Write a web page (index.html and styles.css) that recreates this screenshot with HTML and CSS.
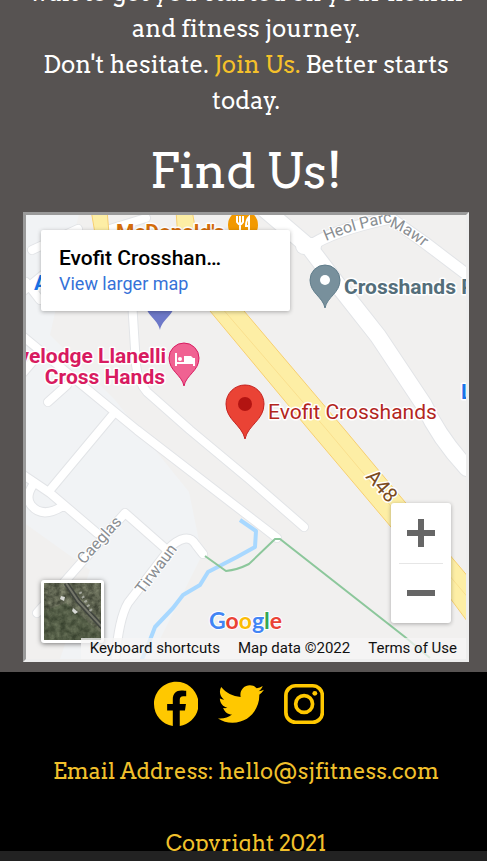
FILE: index.html
```html
<!DOCTYPE html>
<html lang="en">
<head>
<meta charset="utf-8">
<meta name="viewport" content="width=device-width, initial-scale=1">
<title>SJ Fitness</title>
<link rel="stylesheet" href="styles.css">
</head>
<body>
<div class="page">
  <main class="content">
    <p class="intro">wait to get you started on your health and fitness journey.<br>Don't hesitate. <a href="#join">Join Us.</a> Better starts today.</p>
    <h1 class="heading">Find Us!</h1>
    <section class="map" aria-label="Map">
      <svg class="map-canvas" viewBox="26 215 440 444" preserveAspectRatio="xMidYMid slice">
        <defs>
          <path id="heol" d="M326 241Q358 227 400 221"/>
          <path id="mawr" d="M389 227Q407 232 436 258"/>
          <path id="pin" d="M0 43C-2 32-15 28-15 15A15 15 0 0 1 15 15C15 28 2 32 0 43Z"/>
          <g id="roads">
            <path class="w17" d="M262 207L309 247L337 284L378 336L424 405Q439 438 467 468"/>
            <path class="w12" d="M309 247Q330 231 390 218L424 242L470 277"/>
            <path class="w17" d="M304 246h9"/>
            <path class="w8" d="M22 292L54 266M26 282L40 300M32 250L78 229M100 232L146 218M132 300L136 365Q138 382 147 392L190 430L250 480L304 527"/>
            <path class="w8" d="M20 334L115 412L137 430L277 538M67 385L48 402M115 412L50 490M22 474L50 493L97 533M33 485Q25 497 31 505Q42 519 63 506M34 360L22 374"/>
            <path class="w8" d="M37 613L125 513L167 550Q187 530 196 545L203 554M168 551L128 603Q118 620 115 666"/>
          </g>
        </defs>
        <path fill="#f1f0ef" d="M-200 0h900v900h-900z"/>
        <path fill="#f1f3f5" d="M20 210L80 210L60 290L50 335L115 400L189 492L202 555L150 659L60 659L90 570L20 520Z"/>
        <use href="#roads" class="casing"/>
        <use href="#roads" class="surface"/>
        <path class="highway" d="M176 210L192 210L200 255L244 311L345 430L405 502L470 579L470 625L450 598L391 527L309 430L210 311L180 270ZM91 210L107 210L110 245L97 245Z"/>
        <path class="highway-line" d="M215 300L327 430L400 517L470 600"/>
        <path class="river" d="M240 520L256 531L255 547L237 557L208 572L200 585L183 595L173 608L155 627L150 640L140 664"/>
        <path class="trail" d="M205 556L226 571Q237 570 249 564L275 539L280 539L405 637L430 658"/>
        <g class="halo">
          <text class="road-label"><textPath href="#heol">Heol Parc</textPath></text>
          <text class="road-label"><textPath href="#mawr">Mawr</textPath></text>
          <text class="road-label" transform="translate(84 565) rotate(-48)">Caeglas</text>
          <text class="road-label" transform="translate(143 595) rotate(-53)">Tirwaun</text>
          <text class="a48" transform="translate(365 477) rotate(49)">A48</text>
          <text class="place food" x="116" y="239">McDonald's</text>
          <text class="place hotel" text-anchor="end" x="166" y="363">Travelodge Llanelli</text>
          <text class="place hotel" text-anchor="end" x="165" y="384">Cross Hands</text>
          <text class="place slate" x="344" y="294">Crosshands Post</text>
          <text class="place blue" x="34" y="290">A</text>
          <text class="place blue" x="461" y="399">L</text>
          <text class="target" x="268" y="419">Evofit Crosshands</text>
        </g>
        <circle cx="243" cy="225" r="15" fill="#f29900"/>
        <path fill="none" stroke="#fff" stroke-width="2" d="M237 216v6q3 5 6 0v-6M240 216v17M249 233v-16q-3 3-3 9h3"/>
        <use href="#pin" x="160" y="287" fill="#6d78c8"/>
        <use href="#pin" x="184" y="343" fill="#f06292" stroke="#d81b60"/>
        <path fill="none" stroke="#fff" stroke-width="2" d="M176 353v13M176 363h18M194 366v-8"/>
        <path fill="#fff" d="M184 356h7l3 3v4h-10z"/>
        <circle cx="180" cy="359" r="2" fill="#fff"/>
        <use href="#pin" x="325" y="265" fill="#78909c" stroke="#607d8b"/>
        <circle cx="325" cy="280" r="5" fill="#fff"/>
        <path fill="#ea4335" stroke="#c5221f" d="M245 439C242 425 226 420 226 404A19 19 0 0 1 264 404C264 420 248 425 245 439Z"/>
        <circle cx="245" cy="404" r="7" fill="#b31412"/>
        <text class="google" x="209" y="629"><tspan fill="#4285f4">G</tspan><tspan fill="#ea4335">o</tspan><tspan fill="#fbbc05">o</tspan><tspan fill="#4285f4">g</tspan><tspan fill="#34a853">l</tspan><tspan fill="#ea4335">e</tspan></text>
      </svg>
      <div class="place-card">
        <div class="place-name">Evofit Crosshan…</div>
        <a href="#map">View larger map</a>
      </div>
      <button class="satellite" type="button" aria-label="Show satellite imagery">
        <svg viewBox="0 0 57 57">
          <filter id="terrain" x="0" y="0" width="1" height="1" color-interpolation-filters="sRGB"><feTurbulence type="fractalNoise" baseFrequency=".18" numOctaves="4" seed="4"/><feColorMatrix values=".4 0 0 0 .17  .4 0 0 0 .19  .35 0 0 0 .14  0 0 0 0 1"/></filter>
          <path fill="#555a4b" d="M0 0h57v57H0z"/>
          <path filter="url(#terrain)" d="M0 0h57v57H0z"/>
          <path fill="#314529" opacity=".3" d="M0 28L22 20L57 50V57H0Z"/>
          <path fill="none" stroke="#40443e" stroke-width="5" d="M22 0L34 18L60 46"/>
          <path fill="none" stroke="#74766a" stroke-width="2" d="M22 0L34 18L60 46"/>
          <path fill="none" stroke="#a5a89e" stroke-width="3" stroke-dasharray="2 3" d="M36 9L48 29"/>
          <path fill="#d8dad6" d="M17 13l4 1-1 4-4-2zM29 25l5 4-3 2-3-3z"/>
        </svg>
      </button>
      <div class="zoom">
        <button type="button" aria-label="Zoom in"><svg viewBox="0 0 28 28"><path d="M11 0h6v11h11v6H17v11h-6V17H0v-6h11z"/></svg></button>
        <button type="button" aria-label="Zoom out"><svg viewBox="0 0 28 28"><path d="M0 11h28v6H0z"/></svg></button>
      </div>
      <div class="attribution">
        <button type="button">Keyboard shortcuts</button>
        <span>Map data ©2022</span>
        <a href="#terms">Terms of Use</a>
      </div>
    </section>
  </main>
  <footer class="footer">
    <nav class="social" aria-label="Social media">
      <a href="#facebook" aria-label="Facebook"><svg viewBox="8 0 496 512"><path d="M504 256C504 119 393 8 256 8S8 119 8 256c0 123.78 90.69 226.38 209.25 245V327.69h-63V256h63v-54.64c0-62.15 37-96.48 93.67-96.48 27.14 0 55.52 4.84 55.52 4.84v61h-31.28c-30.8 0-40.41 19.12-40.41 38.73V256h68.78l-11 71.69h-57.78V501C413.31 482.38 504 379.78 504 256z"/></svg></a>
      <a href="#twitter" aria-label="Twitter"><svg viewBox="0 0 512 512"><path d="M459.37 151.716c.325 4.548.325 9.097.325 13.645 0 138.72-105.583 298.558-298.558 298.558-59.452 0-114.68-17.219-161.137-47.106 8.447.974 16.568 1.299 25.34 1.299 49.055 0 94.213-16.568 130.274-44.832-46.132-.975-84.792-31.188-98.112-72.772 6.498.974 12.995 1.624 19.818 1.624 9.421 0 18.843-1.3 27.614-3.573-48.081-9.747-84.143-51.98-84.143-102.985v-1.299c13.969 7.797 30.214 12.67 47.431 13.319-28.264-18.843-46.781-51.005-46.781-87.391 0-19.492 5.197-37.36 14.294-52.954 51.655 63.675 129.3 105.258 216.365 109.807-1.624-7.797-2.599-15.918-2.599-24.04 0-57.828 46.782-104.934 104.934-104.934 30.213 0 57.502 12.67 76.67 33.137 23.715-4.548 46.456-13.32 66.599-25.34-7.798 24.366-24.366 44.833-46.132 57.827 21.117-2.273 41.584-8.122 60.426-16.243-14.292 20.791-32.161 39.308-52.628 54.253z"/></svg></a>
      <a href="#instagram" aria-label="Instagram"><svg viewBox="0 0 448 512"><g fill="none" stroke="currentColor" stroke-width="41"><rect x="21" y="53" width="406" height="406" rx="108"/><circle cx="224" cy="256" r="94"/></g><circle cx="343" cy="137" r="27"/></svg></a>
    </nav>
    <p>Email Address: hello@sjfitness.com</p>
    <p>Copyright 2021</p>
  </footer>
</div>
<div class="bottom-bar"></div>
</body>
</html>
```
FILE: styles.css
```css
* { box-sizing: border-box; }

body {
  margin: 0;
  height: 100vh;
  display: flex;
  flex-direction: column;
  overflow: hidden;
  background: #575352;
  color: #fff;
  font-family: Arvo, "DejaVu Serif", serif;
  font-size: 24px;
  line-height: 36px;
  text-align: center;
}

.page {
  flex: 1;
  min-height: 0;
  overflow: hidden;
}

.content { padding: 0 18px 10px 23px; }

.intro { margin: -25px 0 22px; }
.intro a { color: #f5c12a; text-decoration: none; }

.heading {
  margin: 0 0 11px;
  font-size: 48px;
  font-weight: 400;
  line-height: 60px;
}

.map {
  position: relative;
  height: 450px;
  border: 3px solid;
  border-color: #9a9a9a #eee #eee #9a9a9a;
  overflow: hidden;
  font-family: Roboto, sans-serif;
  text-align: left;
}

.map-canvas { display: block; width: 100%; height: 100%; }
.w8 { stroke-width: calc(7px + var(--edge)); }
.w12 { stroke-width: calc(10px + var(--edge)); }
.w17 { stroke-width: calc(15px + var(--edge)); }
#roads path { fill: none; stroke-linejoin: round; stroke-linecap: round; }
.casing { --edge: 3px; stroke: #e2e4e7; }
.surface { --edge: 1px; stroke: #fff; }
.highway { fill: #fdeea5; stroke: #f7cf70; stroke-width: 1px; }
.highway-line { fill: none; stroke: #f9df8e; stroke-width: 1px; }
.river { fill: none; stroke: #a8d8ff; stroke-width: 4px; stroke-linejoin: round; }
.trail { fill: none; stroke: #8cc79b; stroke-width: 2px; }
.halo text { stroke: #fff; stroke-width: 3px; stroke-linejoin: round; paint-order: stroke; }
.halo .road-label { font-size: 16px; fill: #8a8e92; stroke-width: 2px; }
.a48 { font-size: 20px; fill: #7b4b20; }
.place { font-size: 21px; font-weight: 700; }
.food { fill: #d56e0c; }
.hotel { fill: #d81b60; }
.slate { fill: #546e7a; }
.blue { fill: #1a73e8; }
.target { font-size: 21px; fill: #b3261e; }
.google {
  font-family: Lato, sans-serif;
  font-size: 23px;
  font-weight: 700;
  stroke: #fff;
  stroke-width: 2px;
  paint-order: stroke;
}

.place-card {
  position: absolute;
  top: 15px;
  left: 15px;
  width: 249px;
  padding: 15px 18px 14px;
  background: #fff;
  border-radius: 2px;
  box-shadow: 0 1px 4px rgba(0, 0, 0, .3);
}
.place-name {
  color: #000;
  font-size: 21px;
  font-weight: 500;
  line-height: 26px;
}
.place-card a {
  display: block;
  color: #3572d8;
  font-size: 18px;
  line-height: 26px;
  text-decoration: none;
}

.satellite {
  position: absolute;
  left: 15px;
  bottom: 16px;
  width: 63px;
  height: 63px;
  padding: 0;
  border: 3px solid #fff;
  border-radius: 3px;
  background: #555a4b;
  box-shadow: 0 1px 5px rgba(0, 0, 0, .5);
}
.satellite svg { display: block; width: 100%; height: 100%; }

.zoom {
  position: absolute;
  right: 15px;
  bottom: 36px;
  width: 60px;
  background: #fff;
  border-radius: 3px;
  box-shadow: 0 1px 4px rgba(0, 0, 0, .3);
}
.zoom button {
  display: grid;
  place-items: center;
  width: 100%;
  height: 60px;
  padding: 0;
  border: 0;
  background: none;
}
.zoom button + button::before {
  content: "";
  position: absolute;
  top: 60px;
  left: 8px;
  right: 8px;
  height: 1px;
  background: #e6e6e6;
}
.zoom svg { width: 28px; height: 28px; fill: #666; }

.attribution {
  position: absolute;
  right: 0;
  bottom: 0;
  display: flex;
  color: #111;
  font-size: 15px;
  line-height: 21px;
}
.attribution > * {
  padding: 0 9px;
  border: 0;
  background: rgba(245, 245, 245, .75);
  color: inherit;
  font: inherit;
  text-decoration: none;
  white-space: nowrap;
}

.footer {
  min-height: 200px;
  padding: 9px 18px 0 23px;
  background: #000;
  color: #f1c02c;
  font-size: 22px;
}
.social {
  display: flex;
  justify-content: center;
  gap: 20px;
  padding-right: 14px;
}
.social svg { display: block; height: 46px; fill: currentColor; }
.social a { color: #ffc800; }
.footer p { margin: 0 0 36px; }
.social + p { padding-top: 26px; }

.bottom-bar { height: 10px; background: #222; }
```
